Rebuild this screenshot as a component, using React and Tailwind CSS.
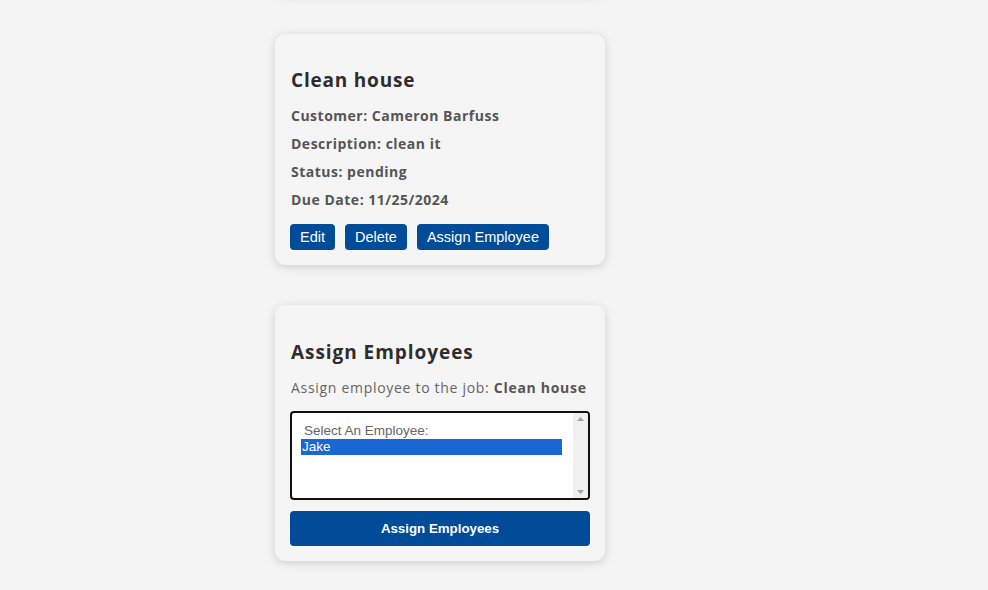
export default function App() {
    const btn = "h-[26px] px-[10px] rounded-[4px] bg-[#004c99] text-white text-[14.5px] leading-[26px] font-['Liberation_Sans',Arial,sans-serif]";

    return (
        <div className="min-h-[590px] bg-[#f4f4f4] overflow-hidden font-['Open_Sans',sans-serif]">
            <div className="w-[330px] ml-[275px] -mt-[166px] flex flex-col gap-[40px]">
                {/* previous card, mostly scrolled away */}
                <div className="h-[160px] rounded-[10px] bg-[#f5f5f5] shadow-[0_2px_10px_rgba(0,0,0,0.15)]" />

                {/* job card */}
                <div className="rounded-[10px] bg-[#f5f5f5] shadow-[0_2px_10px_rgba(0,0,0,0.15)] pl-[15px] pr-[16px] pt-[16px] pb-[15px]">
                    <h3 className="mt-[19px] pl-px text-[19px] leading-[22px] font-bold tracking-[0.8px] text-[#2d2d2d]">Clean house</h3>
                    <div className="mt-[15px] pl-px flex flex-col gap-[8px] text-[14px] leading-[20px] font-bold tracking-[0.5px] text-[#555]">
                        <p>Customer: Cameron Barfuss</p>
                        <p>Description: clean it</p>
                        <p>Status: pending</p>
                        <p>Due Date: 11/25/2024</p>
                    </div>
                    <div className="mt-[14px] flex gap-[10px]">
                        <button className={btn}>Edit</button>
                        <button className={btn}>Delete</button>
                        <button className={btn}>Assign Employee</button>
                    </div>
                </div>

                {/* assign card */}
                <div className="rounded-[10px] bg-[#f5f5f5] shadow-[0_2px_10px_rgba(0,0,0,0.15)] px-[15px] pt-[16px] pb-[15px]">
                    <h3 className="mt-[20px] pl-px text-[19px] leading-[22px] font-bold tracking-[0.95px] text-[#2d2d2d]">Assign Employees</h3>
                    <p className="mt-[15px] pl-px text-[14px] leading-[20px] tracking-[0.7px] text-[#666]">
                        Assign employee to the job: <span className="font-bold text-[#555]">Clean house</span>
                    </p>
                    <div className="mt-[13px] h-[89px] border-2 border-[#111] rounded-[4px] bg-white flex overflow-hidden font-['Liberation_Sans',Arial,sans-serif] text-[13.5px]">
                        <div className="flex-1 pl-[9px] pr-[11px] pt-[9px]">
                            <div className="h-[17px] leading-[17px] pl-[3px] text-[#666]">Select An Employee:</div>
                            <div className="h-[16px] leading-[16px] pl-[1px] bg-[#1967d2] text-white">Jake</div>
                        </div>
                        <div className="w-[15px] bg-[#f1f1f1] flex flex-col justify-between items-center py-[4px]">
                            <svg width="7" height="4" viewBox="0 0 7 4"><path d="M3.5 0L7 4H0z" fill="#a3a3a3" /></svg>
                            <svg width="7" height="4" viewBox="0 0 7 4"><path d="M0 0h7L3.5 4z" fill="#a3a3a3" /></svg>
                        </div>
                    </div>
                    <button className="mt-[11px] w-full h-[35px] rounded-[4px] bg-[#004c99] text-white text-[13.3px] font-bold font-['Liberation_Sans',Arial,sans-serif]">
                        Assign Employees
                    </button>
                </div>
            </div>
        </div>
    );
}
